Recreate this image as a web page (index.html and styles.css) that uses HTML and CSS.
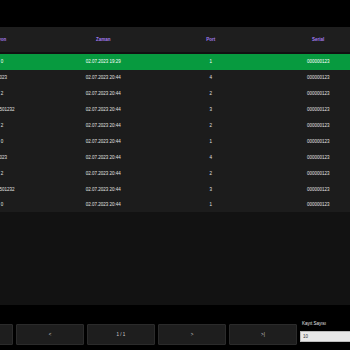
FILE: index.html
```html
<!DOCTYPE html>
<html>
<head>
<meta charset="utf-8">
<link rel="stylesheet" href="styles.css">
</head>
<body>
<div class="page">
  <div class="top"></div>
  <div class="table-wrap">
    <table class="grid">
      <thead>
        <tr><th>Lokasyon</th><th>Zaman</th><th>Port</th><th>Serial</th></tr>
      </thead>
      <tbody>
        <tr class="active"><td>Cihaz 0</td><td>02.07.2023 19:29</td><td>1</td><td>000000123</td></tr>
        <tr><td>Cihaz 2023</td><td>02.07.2023 20:44</td><td>4</td><td>000000123</td></tr>
        <tr><td>Cihaz 2</td><td>02.07.2023 20:44</td><td>2</td><td>000000123</td></tr>
        <tr><td>Cihaz 1230501232</td><td>02.07.2023 20:44</td><td>3</td><td>000000123</td></tr>
        <tr><td>Cihaz 2</td><td>02.07.2023 20:44</td><td>2</td><td>000000123</td></tr>
        <tr><td>Cihaz 0</td><td>02.07.2023 20:44</td><td>1</td><td>000000123</td></tr>
        <tr><td>Cihaz 2023</td><td>02.07.2023 20:44</td><td>4</td><td>000000123</td></tr>
        <tr><td>Cihaz 2</td><td>02.07.2023 20:44</td><td>2</td><td>000000123</td></tr>
        <tr><td>Cihaz 1230501232</td><td>02.07.2023 20:44</td><td>3</td><td>000000123</td></tr>
        <tr><td>Cihaz 0</td><td>02.07.2023 20:44</td><td>1</td><td>000000123</td></tr>
      </tbody>
    </table>
  </div>
  <div class="filler"></div>
  <div class="pager">
    <button class="pbtn">|&lt;</button>
    <button class="pbtn">&lt;</button>
    <button class="pbtn">1 / 1</button>
    <button class="pbtn">&gt;</button>
    <button class="pbtn">&gt;|</button>
    <div class="count">
      <label class="count-label">Kayıt Sayısı</label>
      <input class="count-input" type="text" value="10">
    </div>
  </div>
</div>
</body>
</html>
```
FILE: styles.css
```css
html, body {
  margin: 0;
  padding: 0;
  background: #000;
  overflow: hidden;
}
body {
  width: 350px;
  height: 350px;
  font-family: "Liberation Sans", Arial, sans-serif;
  font-size: 4.5px;
  color: #e6e6e6;
}
.page {
  margin-left: -58px;
  width: 428px;
}
.top {
  height: 27px;
}
.table-wrap {
  background: #1c1c1c;
  height: 185px;
}
.grid {
  width: 430px;
  border-collapse: collapse;
  table-layout: fixed;
}
.grid th {
  height: 25px;
  padding: 0;
  font-weight: bold;
  color: #a47cf0;
  text-align: center;
  background: #1e1e1e;
  border-bottom: 2px solid #111;
}
.grid td {
  height: 15.9px;
  padding: 0;
  text-align: center;
  color: #e2e2e2;
}
.grid tr.active td {
  background: #079a3f;
  color: #fff;
}
.filler {
  background: #121212;
  height: 93px;
}
.pager {
  margin-top: 16px;
  padding-left: 3px;
  display: flex;
  gap: 3px;
  align-items: flex-end;
}
.pbtn {
  width: 68px;
  height: 21px;
  margin: 0;
  padding: 0;
  background: #1e1e1e;
  border: 1px solid #2b2b2b;
  border-radius: 1px;
  color: #d0d0d0;
  font-family: "Liberation Sans", Arial, sans-serif;
  font-size: 4.5px;
}
.count {
  display: flex;
  flex-direction: column;
  gap: 5px;
  margin-left: 0;
  padding-bottom: 3px;
}
.count-label {
  color: #e6e6e6;
  font-size: 4.5px;
  padding-left: 2px;
}
.count-input {
  width: 60px;
  height: 11px;
  box-sizing: border-box;
  margin: 0;
  padding: 0 2px;
  border: 1px solid #bbb;
  background: #e8e8e8;
  color: #333;
  font-family: "Liberation Sans", Arial, sans-serif;
  font-size: 4.5px;
}
```
